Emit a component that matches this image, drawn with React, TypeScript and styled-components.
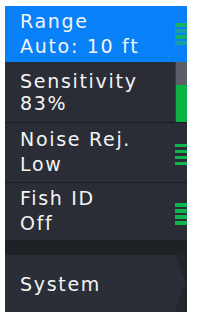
import React from "react";
import styled, { createGlobalStyle } from "styled-components";

const Global = createGlobalStyle`
  html, body { margin: 0; padding: 0; background: #ffffff; }
  #root { width: 201px; height: 316px; }
`;

const Panel = styled.div`
  margin: 6px 0 0 5px;
  width: 182px;
  height: 306px;
  background: #22252b;
  display: flex;
  flex-direction: column;
  font-family: "DejaVu Sans", Verdana, sans-serif;
  font-size: 19px;
  color: #f4f4f4;
  letter-spacing: 1.7px;
`;

const Row = styled.div<{ $h: number; $bg: string; $sep?: boolean }>`
  display: flex;
  height: ${(p) => p.$h}px;
  background: ${(p) => p.$bg};
  border-bottom: ${(p) => (p.$sep ? "1px solid #1b1d22" : "none")};
  flex: none;
`;

const Label = styled.div<{ $pt: number; $lh: number }>`
  flex: 1;
  padding: ${(p) => p.$pt}px 0 0 15px;
  line-height: ${(p) => p.$lh}px;
  white-space: nowrap;
  overflow: hidden;
`;

const Line = styled.div``;

const Bars = styled.div<{ $pt: number }>`
  width: 12px;
  display: flex;
  flex-direction: column;
  justify-content: center;
  gap: 2.4px;
  padding-top: ${(p) => p.$pt}px;
  box-sizing: border-box;
`;

const Bar = styled.div<{ $c: string }>`
  height: 3.6px;
  background: ${(p) => p.$c};
`;

const Level = styled.div`
  width: 12px;
  display: flex;
  flex-direction: column;
  border-left: 1px solid #3a3e46;
  box-sizing: border-box;
`;

const LevelTrack = styled.div`
  height: 23px;
  background: #5b5f67;
`;

const LevelFill = styled.div`
  flex: 1;
  background: #0bb244;
`;

const Band = styled.div`
  height: 15px;
  background: #1e2126;
  flex: none;
`;

const SystemArea = styled.div`
  flex: 1;
  display: flex;
  background: #23262c;
`;

const SystemButton = styled.div`
  width: 180px;
  display: flex;
  align-items: center;
  padding-left: 15px;
  box-sizing: border-box;
  background: #2b2e36;
  clip-path: polygon(0 0, 170px 0, 180px 50%, 170px 100%, 0 100%);
  line-height: 25px;
  padding-top: 1px;
`;

const green = "#10b44c";

export default function App() {
  return (
    <>
      <Global />
      <Panel>
        <Row $h={56} $bg="#0880f8">
          <Label $pt={3} $lh={25}>
            <Line>Range</Line>
            <Line>Auto: 10 ft</Line>
          </Label>
          <Bars $pt={0}>
            <Bar $c="#14b262" />
            <Bar $c="#1a9fa0" />
            <Bar $c="#14b262" />
            <Bar $c="#1a9fa0" />
          </Bars>
        </Row>
        <Row $h={60} $bg="#2a2d35" $sep>
          <Label $pt={8} $lh={22}>
            <Line>Sensitivity</Line>
            <Line>83%</Line>
          </Label>
          <Level>
            <LevelTrack />
            <LevelFill />
          </Level>
        </Row>
        <Row $h={59} $bg="#2a2d35" $sep>
          <Label $pt={4} $lh={25}>
            <Line>Noise Rej.</Line>
            <Line>Low</Line>
          </Label>
          <Bars $pt={4}>
            <Bar $c={green} />
            <Bar $c={green} />
            <Bar $c={green} />
            <Bar $c={green} />
          </Bars>
        </Row>
        <Row $h={57} $bg="#2a2d35">
          <Label $pt={3} $lh={25}>
            <Line>Fish ID</Line>
            <Line>Off</Line>
          </Label>
          <Bars $pt={5}>
            <Bar $c={green} />
            <Bar $c={green} />
            <Bar $c={green} />
            <Bar $c={green} />
          </Bars>
        </Row>
        <Band />
        <SystemArea>
          <SystemButton>System</SystemButton>
        </SystemArea>
      </Panel>
    </>
  );
}
